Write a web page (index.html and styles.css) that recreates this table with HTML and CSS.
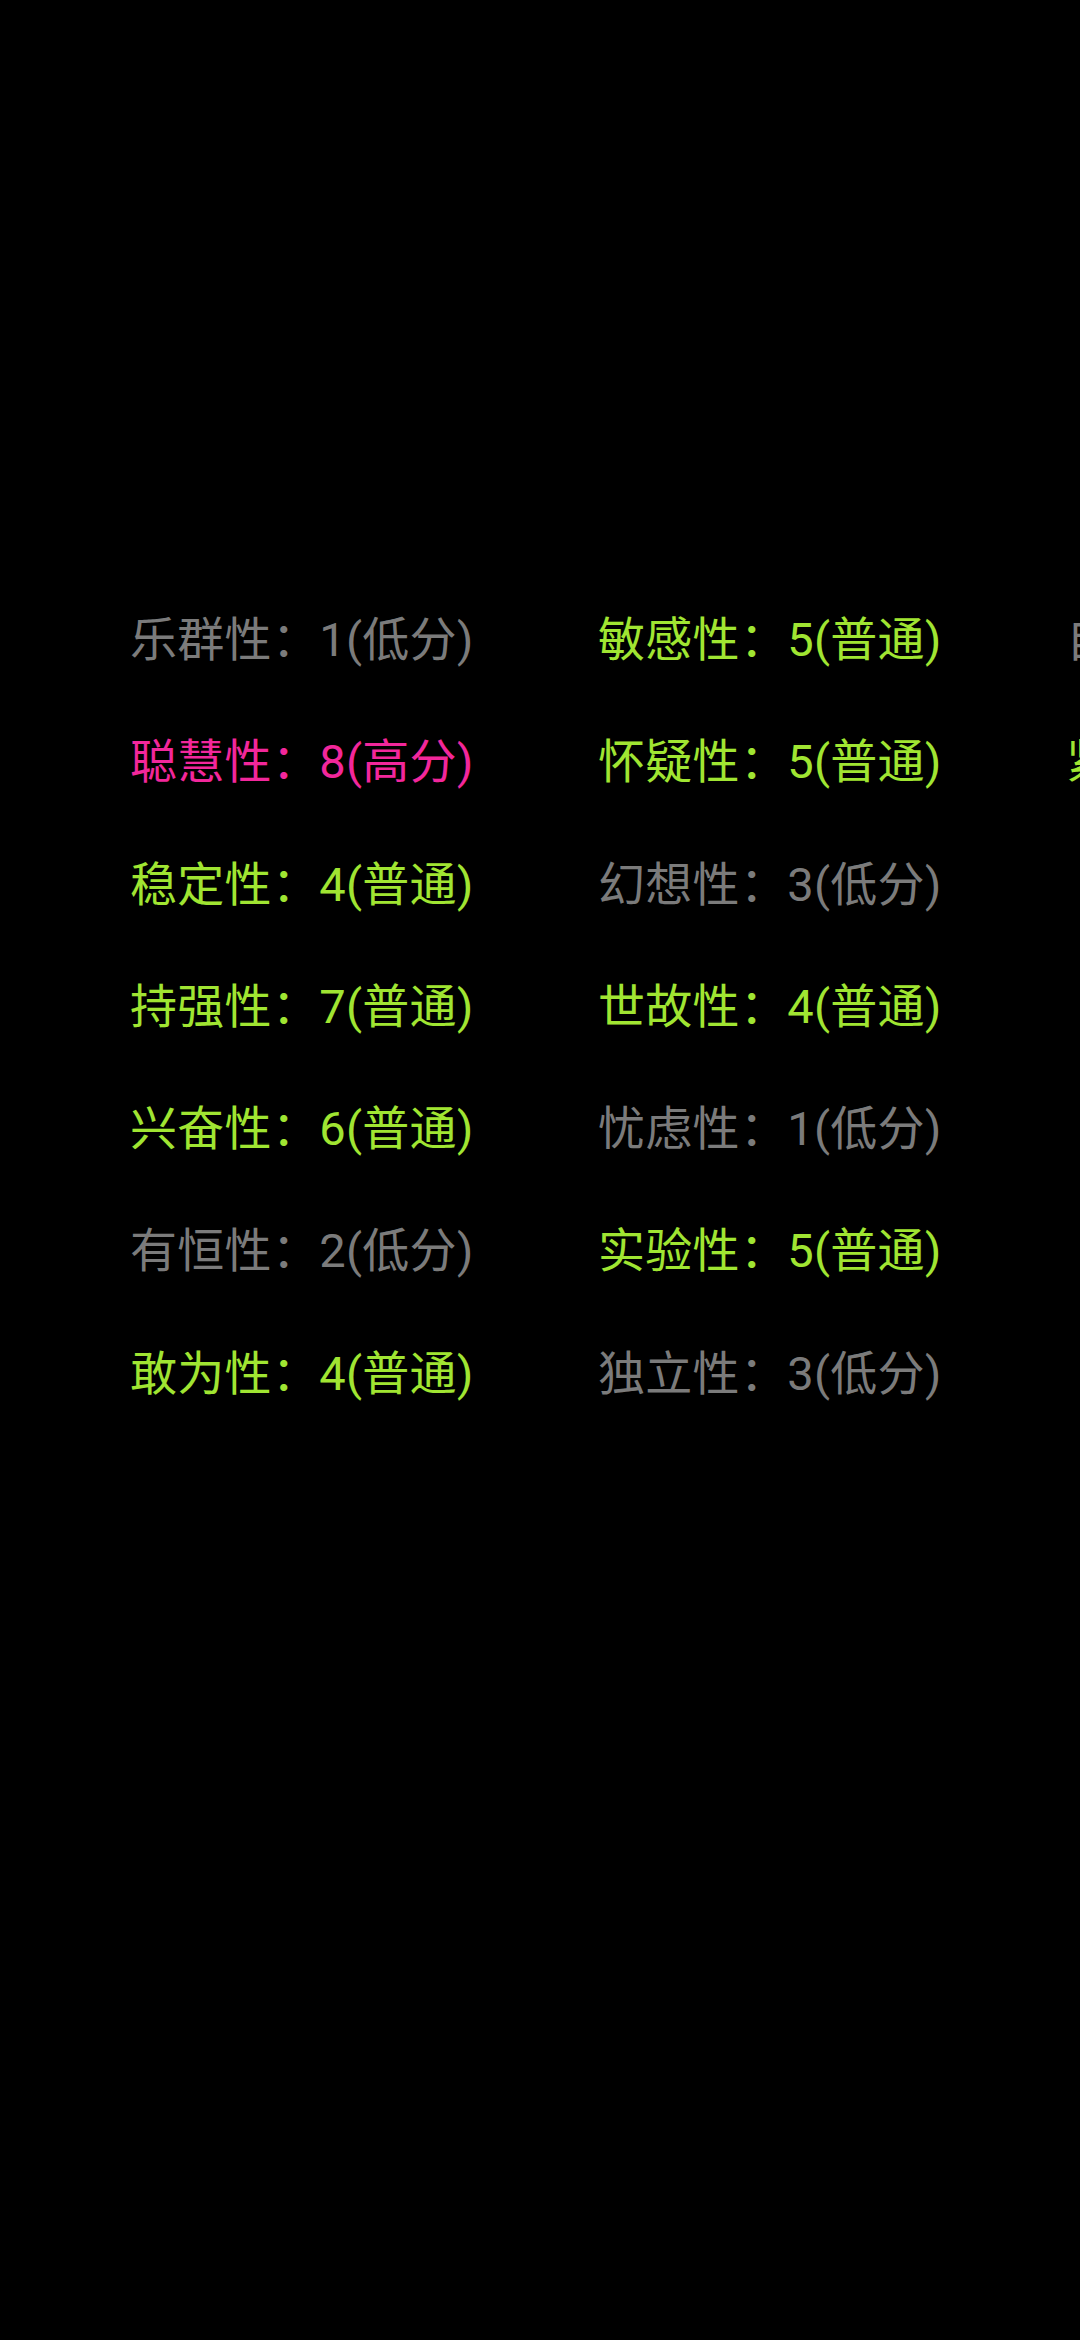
FILE: index.html
```html
<!DOCTYPE html>
<html lang="zh-CN">
<head>
<meta charset="utf-8">
<title>16PF</title>
<link rel="stylesheet" href="styles.css">
</head>
<body>
<main class="screen">
  <div class="grid">
    <div class="cell low">乐群性：1(低分)</div>
    <div class="cell mid">敏感性：5(普通)</div>
    <div class="cell low">自律性：3(低分)</div>

    <div class="cell high">聪慧性：8(高分)</div>
    <div class="cell mid">怀疑性：5(普通)</div>
    <div class="cell mid">紧张性：5(普通)</div>

    <div class="cell mid">稳定性：4(普通)</div>
    <div class="cell low">幻想性：3(低分)</div>
    <div class="cell empty"></div>

    <div class="cell mid">持强性：7(普通)</div>
    <div class="cell mid">世故性：4(普通)</div>
    <div class="cell empty"></div>

    <div class="cell mid">兴奋性：6(普通)</div>
    <div class="cell low">忧虑性：1(低分)</div>
    <div class="cell empty"></div>

    <div class="cell low">有恒性：2(低分)</div>
    <div class="cell mid">实验性：5(普通)</div>
    <div class="cell empty"></div>

    <div class="cell mid">敢为性：4(普通)</div>
    <div class="cell low">独立性：3(低分)</div>
    <div class="cell empty"></div>
  </div>
</main>
</body>
</html>
```

FILE: styles.css
```css
html, body {
  margin: 0;
  padding: 0;
  background: #000;
  overflow: hidden;
}

.screen {
  width: 1080px;
  height: 2340px;
  background: #000;
  overflow: hidden;
  font-family: Roboto, "Noto Sans CJK SC", sans-serif;
}

.grid {
  display: grid;
  grid-template-columns: 468px 468px 468px;
  grid-auto-rows: 122.3px;
  padding-top: 579px;
  padding-left: 130px;
  width: max-content;
}

.cell {
  font-size: 47px;
  line-height: 122px;
  white-space: nowrap;
  letter-spacing: 0.3px;
}

.low {
  color: #7b7b7b;
}

.mid {
  color: #a0e532;
}

.high {
  color: #f2279b;
}
```
